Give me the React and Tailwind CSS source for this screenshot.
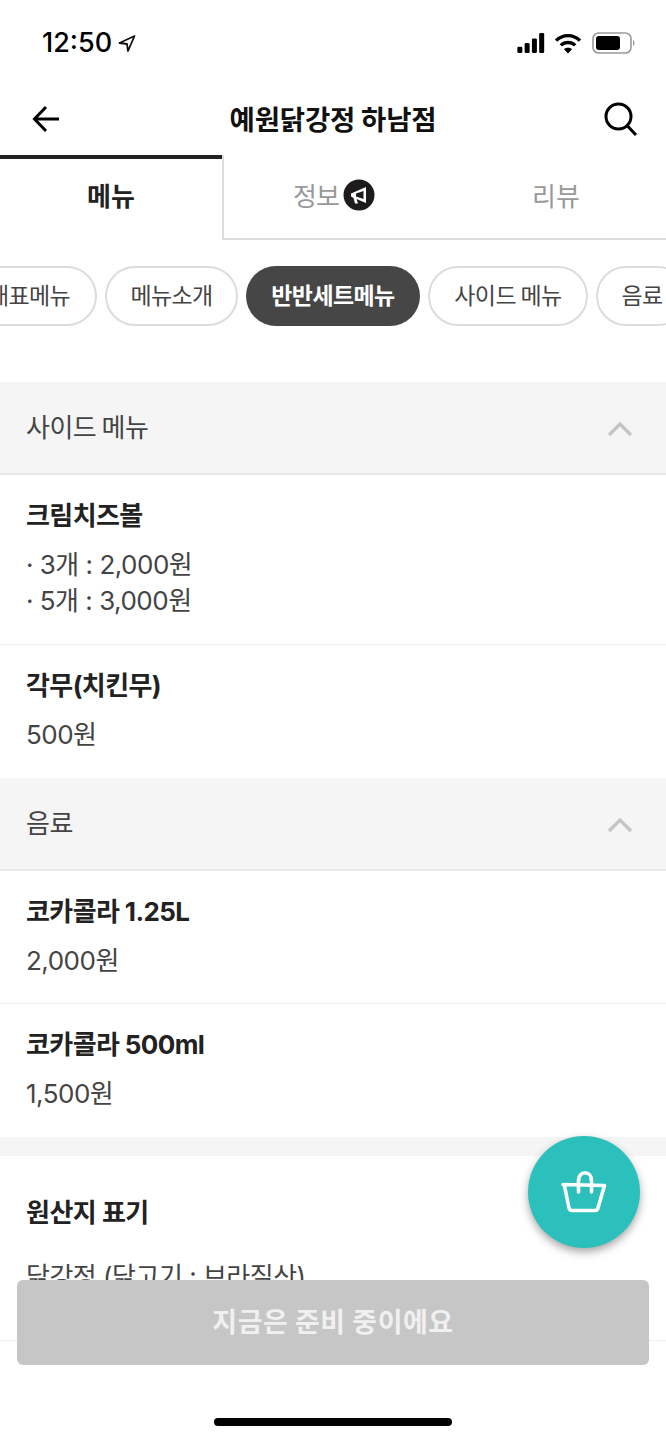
const font = { fontFamily: '"Noto Sans CJK KR", "Noto Sans", sans-serif' };
const mixed = { fontFamily: '"Inter", "Noto Sans CJK KR", sans-serif' };

function Chevron() {
  return (
    <svg width="26" height="16" viewBox="0 0 26 16" fill="none" stroke="#c4c4c4" strokeWidth="3.2">
      <path d="M2 14 L13 3 L24 14" />
    </svg>
  );
}

function SectionHead({ title }) {
  return (
    <div className="flex h-[93px] items-center justify-between border-b-2 border-[#e8e8e8] bg-[#f5f5f5] pl-[26px] pr-[33px]">
      <span className="mb-[4px] text-[26px] leading-none tracking-[-0.5px] text-[#444]">{title}</span>
      <span className="mt-[2px] flex"><Chevron /></span>
    </div>
  );
}

function Item({ name, prices, h, border = true }) {
  return (
    <div style={mixed} className={`px-[26px] pt-[23px] ${h} ${border ? "border-b border-[#f0f0f0]" : ""}`}>
      <div className="text-[26px] font-bold leading-[36px] tracking-[-0.6px] text-[#222]">{name}</div>
      <div className="mt-[13px] text-[26px] leading-[36px] tracking-[-0.5px] text-[#444]">
        {prices.map((p) => <div key={p}>{p}</div>)}
      </div>
    </div>
  );
}

function Chip({ children, active, className = "" }) {
  return (
    <div className={`flex h-[60px] shrink-0 items-center justify-center rounded-full pb-[3px] text-[23px] leading-none tracking-[-0.6px] ${active ? "bg-[#464646] font-bold text-white" : "border-2 border-[#dcdcdc] bg-white text-[#444]"} ${className}`}>
      {children}
    </div>
  );
}

export default function App() {
  return (
    <div style={font} className="relative flex h-[1440px] w-[666px] flex-col overflow-hidden bg-white">
      <div className="flex h-[82px] shrink-0 items-start justify-between pl-[42px] pr-[30px] pt-[25px]">
        <div className="flex items-center gap-[6px]">
          <span style={{ fontFamily: '"Inter", sans-serif' }} className="text-[27px] font-medium leading-[36px] text-black">12:50</span>
          <svg width="18" height="19" viewBox="0 0 18 18" fill="none" stroke="#111" strokeWidth="1.8" strokeLinejoin="round"><path d="M16.5 1.5 L1.5 8.5 L9 9.5 L10 16.5 Z" /></svg>
        </div>
        <div className="mt-[6px] flex items-center gap-[8px]">
          <svg width="30" height="20" viewBox="0 0 30 22" fill="#000">
            <rect x="0" y="15" width="5.5" height="7" rx="1.5" /><rect x="8" y="11" width="5.5" height="11" rx="1.5" /><rect x="16" y="6" width="5.5" height="16" rx="1.5" /><rect x="24" y="0" width="5.5" height="22" rx="1.5" />
          </svg>
          <svg width="28" height="21" viewBox="0 0 28 22" fill="none" stroke="#000" strokeWidth="3.6">
            <path d="M1.5 8 C8.5 1 19.5 1 26.5 8" /><path d="M6.5 13 C10.5 9 17.5 9 21.5 13" /><path d="M14 21.5 L9.8 17 C12 15 16 15 18.2 17 Z" fill="#000" stroke="none" />
          </svg>
          <svg width="44" height="24" viewBox="0 0 44 24" className="ml-[2px]">
            <rect x="1" y="2" width="38" height="20" rx="5.5" fill="none" stroke="#999" strokeWidth="1.6" />
            <rect x="4" y="5" width="24" height="14" rx="3" fill="#000" />
            <path d="M41 9 C43 10 43 14 41 15 Z" fill="#999" />
          </svg>
        </div>
      </div>

      <div className="flex h-[73px] shrink-0 items-center justify-between pl-[32px] pr-[28px]">
        <svg width="28" height="28" viewBox="0 0 28 28" fill="none" stroke="#000" strokeWidth="3"><path d="M27 14 H3" /><path d="M14 2 L2.5 14 L14 26" /></svg>
        <span className="ml-[2px] text-[27.5px] font-bold leading-none tracking-[-0.2px] text-[#111]">예원닭강정 하남점</span>
        <svg width="34" height="34" viewBox="0 0 34 34" fill="none" stroke="#000" strokeWidth="3"><circle cx="14.5" cy="14.5" r="12.5" /><path d="M23.5 24 L32 33" /></svg>
      </div>

      <div className="flex h-[85px] shrink-0">
        <div className="flex w-[222px] items-center justify-center border-t-[4px] border-[#222] pb-[10px] text-[26px] font-bold leading-none text-[#222]">메뉴</div>
        <div className="flex flex-1 border-b-2 border-l-2 border-[#dddddd]">
          <div className="flex w-[222px] items-center justify-center gap-[4px] pb-[4px] pr-[2px] text-[26px] leading-none text-[#999]">
            <span className="tracking-[-1px]">정보</span>
            <svg width="32" height="32" viewBox="0 0 32 32"><circle cx="16" cy="16" r="15.5" fill="#1c1c1c" /><path d="M23 8 L23 24 L13.5 20 L15 24.5 L12 24.5 L10.5 19 L8 17.5 L8 14.5 Z" fill="#fff" /><path d="M20.5 12 L20.5 20 L13 17.5 L13 14.5 Z" fill="#1c1c1c" /></svg>
          </div>
          <div className="flex flex-1 items-center justify-center pb-[4px] text-[26px] leading-none text-[#999]">리뷰</div>
        </div>
      </div>

      <div className="mt-[26px] flex h-[61px] shrink-0 gap-[8px] overflow-hidden">
        <div className="w-[97px] shrink-0 overflow-hidden">
          <Chip className="ml-[-39px] w-[136px]"><span className="whitespace-nowrap">대표메뉴</span></Chip>
        </div>
        <Chip className="w-[133px]">메뉴소개</Chip>
        <Chip active className="w-[174px]">반반세트메뉴</Chip>
        <Chip className="w-[160px]">사이드 메뉴</Chip>
        <Chip className="w-[92px]">음료</Chip>
      </div>

      <div className="mt-[55px] shrink-0">
        <SectionHead title="사이드 메뉴" />
        <Item name="크림치즈볼" prices={["· 3개 : 2,000원", "· 5개 : 3,000원"]} h="h-[170px]" />
        <Item name="각무(치킨무)" prices={["500원"]} h="h-[133px]" border={false} />
        <SectionHead title="음료" />
        <Item name="코카콜라 1.25L" prices={["2,000원"]} h="h-[133px]" />
        <Item name="코카콜라 500ml" prices={["1,500원"]} h="h-[133px]" border={false} />
        <div className="h-[19px] bg-[#f5f5f5]" />
        <div style={mixed} className="px-[26px] pt-[39px]">
          <div className="text-[26px] font-bold leading-[36px] tracking-[-0.5px] text-[#222]">원산지 표기</div>
          <div className="mt-[28px] text-[26px] leading-[36px] tracking-[-0.5px] text-[#444]">닭강정 (닭고기 : 브라질산)</div>
        </div>
      </div>

      <div className="absolute bottom-0 left-0 right-0 h-[100px] border-t border-[#f0f0f0] bg-white">
        <div className="absolute bottom-[14px] left-1/2 h-[8px] w-[238px] -translate-x-1/2 rounded-full bg-black" />
      </div>

      <div className="absolute left-[17px] top-[1280px] flex h-[85px] w-[632px] items-center justify-center rounded-[6px] bg-[#c6c6c6] pb-[4px] text-[27px] font-bold leading-none tracking-[0.5px] text-[#f0f0f0]">
        지금은 준비 중이에요
      </div>

      <div className="absolute left-[528px] top-[1136px] flex h-[112px] w-[112px] items-center justify-center rounded-full bg-[#2bc0bb] shadow-[0_4px_8px_rgba(0,0,0,0.35)]">
        <svg width="46" height="44" viewBox="0 0 46 44" fill="none" stroke="#fff" strokeWidth="3.6" strokeLinecap="round" strokeLinejoin="round">
          <path d="M2 14.5 L43.5 15.5 L37 38 Q36.5 40.5 34 40.5 L11 40.5 Q8.5 40.5 8 38 L3.5 16" />
          <path d="M17.5 22 V11 C17.5 0 30.5 0 30.5 11 V22" />
        </svg>
      </div>
    </div>
  );
}
